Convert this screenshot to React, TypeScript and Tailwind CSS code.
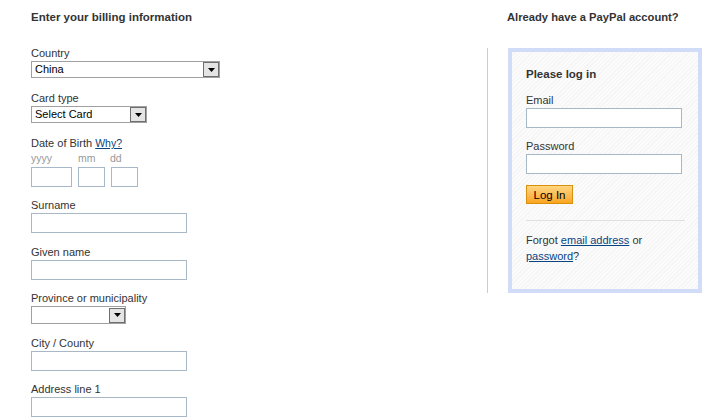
import React from "react";

const Label = ({ children }: { children: React.ReactNode }) => (
  <div className="text-[11px] leading-[14px] mb-px text-[#333]">{children}</div>
);

const TextBox = ({ w }: { w: string }) => (
  <div className={`${w} h-[20px] border border-[#a9b8c6] bg-white`} />
);

const Select = ({ w, h, value }: { w: string; h: string; value?: string }) => (
  <div className={`${w} ${h} border border-[#a0a0a0] bg-white flex items-center justify-between`}>
    <span className="pl-[3px] text-[11px] leading-[15px] text-black">{value}</span>
    <span className="w-[16px] h-[15px] border border-[#6f6f6f] bg-[#e4e4e4] flex items-center justify-center">
      <svg width="7" height="4" viewBox="0 0 7 4">
        <path d="M0 0h7L3.5 4z" fill="#000" />
      </svg>
    </span>
  </div>
);

const BillingForm = () => (
  <div className="w-[487px] shrink-0 pl-[31px] pt-[10px]">
    <h2 className="text-[11.5px] leading-[14px] font-bold text-[#333]">Enter your billing information</h2>
    <div className="mt-[22px]">
      <Label>Country</Label>
      <Select w="w-[189px]" h="h-[17px]" value="China" />
    </div>
    <div className="mt-[13px]">
      <Label>Card type</Label>
      <Select w="w-[116px]" h="h-[17px]" value="Select Card" />
    </div>
    <div className="mt-[13px]">
      <div className="text-[11px] leading-[14px] text-[#333]">
        Date of Birth{" "}
        <a href="#" className="text-[10.5px] text-[#084482] underline">Why?</a>
      </div>
      <div className="flex text-[10.5px] leading-[14px] text-[#999] mt-[1px] mb-[2px]">
        <span className="w-[47px]">yyyy</span>
        <span className="w-[32px]">mm</span>
        <span>dd</span>
      </div>
      <div className="flex gap-[6px]">
        <TextBox w="w-[41px]" />
        <TextBox w="w-[27px]" />
        <TextBox w="w-[27px]" />
      </div>
    </div>
    <div className="mt-[11px]">
      <Label>Surname</Label>
      <TextBox w="w-[156px]" />
    </div>
    <div className="mt-[12px]">
      <Label>Given name</Label>
      <TextBox w="w-[156px]" />
    </div>
    <div className="mt-[11px]">
      <Label>Province or municipality</Label>
      <Select w="w-[95px]" h="h-[18px]" />
    </div>
    <div className="mt-[12px]">
      <Label>City / County</Label>
      <TextBox w="w-[156px]" />
    </div>
    <div className="mt-[11px]">
      <Label>Address line 1</Label>
      <TextBox w="w-[156px]" />
    </div>
  </div>
);

const LoginBox = () => (
  <div className="pt-[10px]">
    <h2 className="text-[11.2px] leading-[14px] font-bold text-[#333] pl-[20px]">Already have a PayPal account?</h2>
    <div className="flex mt-[24px]">
      <div className="w-px h-[245px] bg-[#cccccc]" />
      <div className="ml-[20px] w-[194px] h-[245px] border-[4px] border-[#d0dcf8] bg-[repeating-linear-gradient(135deg,#fbfbfb_0px,#fbfbfb_2px,#f5f5f5_2px,#f5f5f5_3px)] px-[14px] pt-[15px]">
        <h3 className="text-[11.5px] leading-[14px] font-bold text-[#333]">Please log in</h3>
        <div className="mt-[12px]">
          <Label>Email</Label>
          <div className="w-[156px] h-[20px] border border-[#a9b8c6] bg-white" />
        </div>
        <div className="mt-[11px]">
          <Label>Password</Label>
          <div className="w-[156px] h-[20px] border border-[#a9b8c6] bg-white" />
        </div>
        <button className="block mt-[11px] w-[47px] h-[19px] border border-[#d9900f] bg-gradient-to-b from-[#ffd67f] to-[#f9a51b] text-[11.5px] leading-[16px] text-black">
          Log In
        </button>
        <div className="mt-[16px] w-[159px] h-px bg-[#e0e0e0]" />
        <p className="mt-[11px] text-[11px] leading-[16px] text-[#333]">
          Forgot <a href="#" className="text-[#084482] underline">email address</a> or
          <br />
          <a href="#" className="text-[#084482] underline">password</a>?
        </p>
      </div>
    </div>
  </div>
);

export default function App() {
  return (
    <div className="w-[706px] h-[418px] overflow-hidden bg-white flex font-['Liberation_Sans',Arial,sans-serif]">
      <BillingForm />
      <LoginBox />
    </div>
  );
}
